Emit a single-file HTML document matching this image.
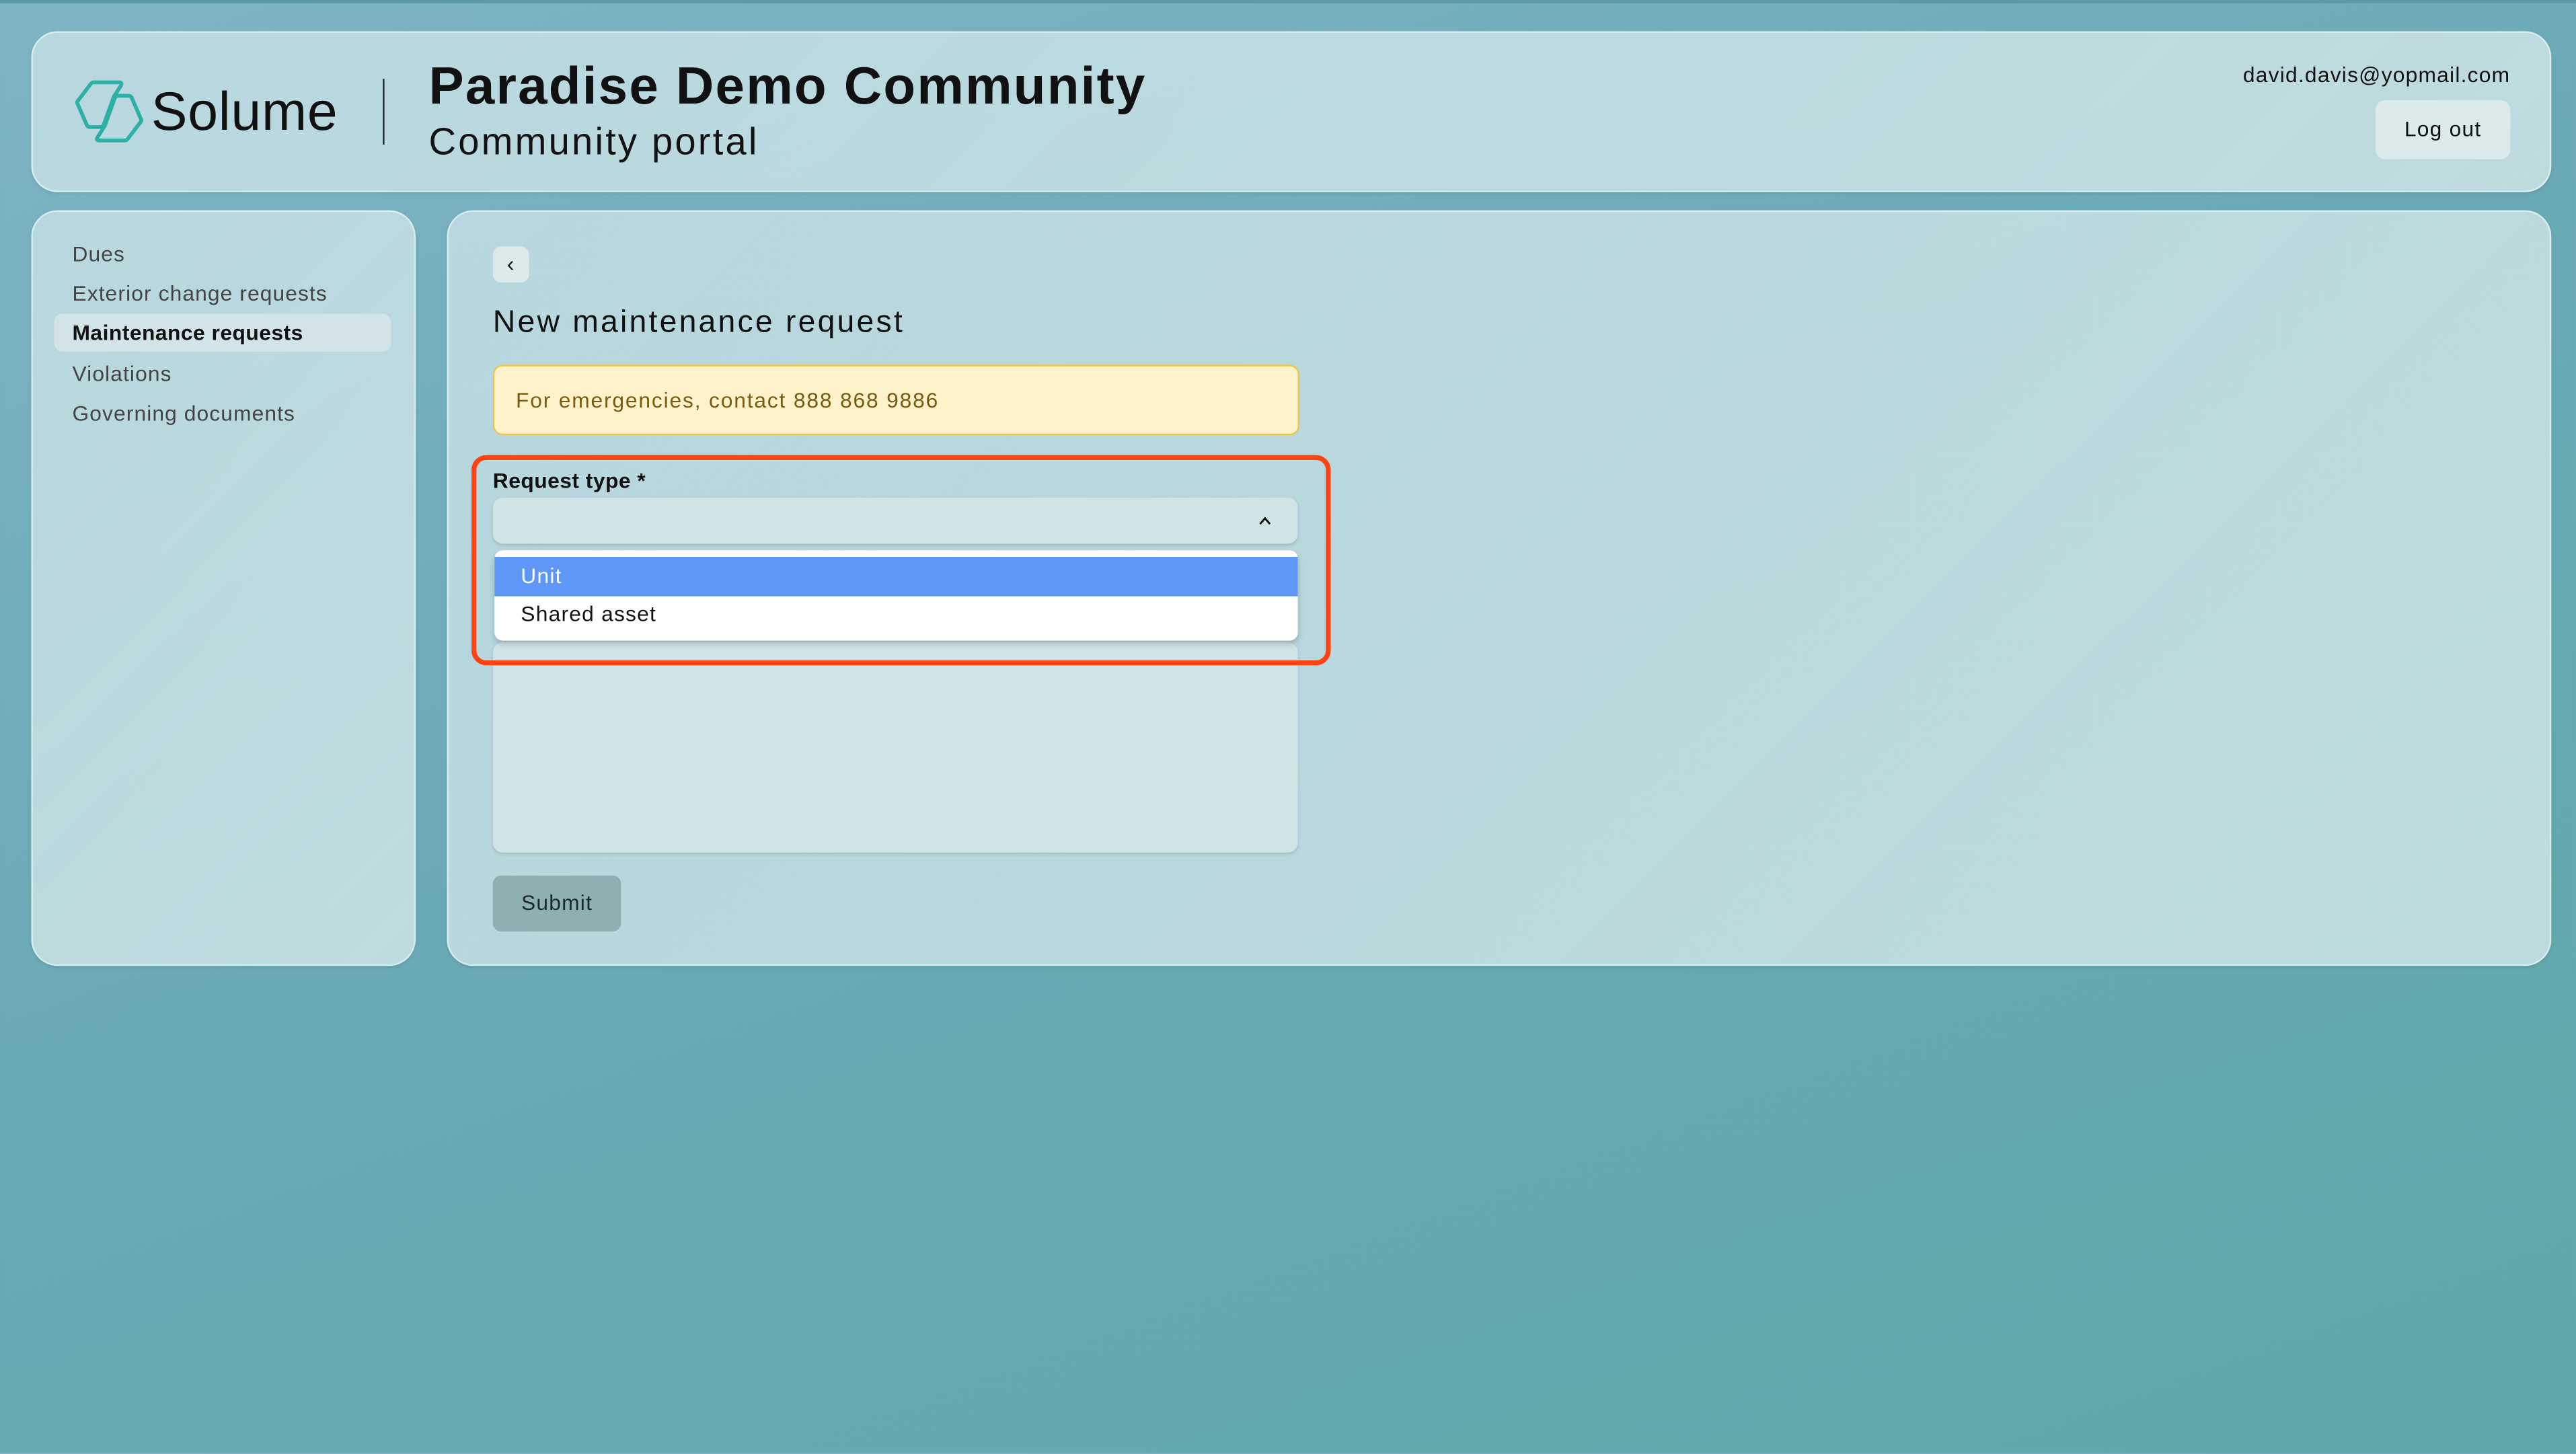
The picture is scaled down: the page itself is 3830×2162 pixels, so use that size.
<!DOCTYPE html>
<html><head><meta charset="utf-8"><style>
html,body{margin:0;padding:0;width:3830px;height:2160px;overflow:hidden}
body{background:linear-gradient(160deg,#7fb4c6 0%,#6aaab6 45%,#5ea8a8 100%)}
#w{position:absolute;left:0;top:0;width:1568px;height:885px;transform:scale(2.44260);transform-origin:0 0;font-family:"Liberation Sans",sans-serif;color:#111;letter-spacing:.5px}
.panel{position:absolute;background:linear-gradient(135deg,rgba(200,225,230,.8),rgba(205,228,230,.85));border:1px solid rgba(230,245,245,.7);border-radius:16px;box-shadow:0 1px 2px rgba(0,0,0,.08)}
.nav div{position:absolute;left:24px;font-size:13px;color:#444;letter-spacing:.45px}
</style></head><body><div id="w">
<div style="position:absolute;left:0;top:0;width:1568px;height:2px;background:#5e9aa6"></div>
<div class="panel" style="left:19px;top:19px;width:1532px;height:96px">
 <svg style="position:absolute;left:22px;top:24px" width="49" height="49" viewBox="0 0 360 360" fill="none" stroke="#2fb0a6" stroke-width="17" stroke-linejoin="round">
  <path d="M110 45 L225 45 Q240 45 232 60 L200 110 L155 235 Q150 245 140 245 L95 245 Q85 245 80 237 L38 140 Q35 135 38 130 L95 55 Q102 45 110 45 Z"/>
  <path d="M250 305 L135 305 Q120 305 128 290 L160 240 L205 115 Q210 105 220 105 L265 105 Q275 105 280 113 L322 210 Q325 215 322 220 L265 295 Q258 305 250 305 Z"/>
 </svg>
 <div style="position:absolute;left:72px;top:29px;font-size:33px;color:#111;letter-spacing:.3px">Solume</div>
 <div style="position:absolute;left:213px;top:28px;width:1px;height:40px;background:#222"></div>
 <div style="position:absolute;left:241px;top:14px;font-size:32px;font-weight:bold;letter-spacing:.9px">Paradise Demo Community</div>
 <div style="position:absolute;left:241px;top:53px;font-size:23px;letter-spacing:1.3px">Community portal</div>
 <div style="position:absolute;right:24px;top:18px;font-size:13px">david.davis@yopmail.com</div>
 <div style="position:absolute;right:24px;top:41px;width:82px;height:36px;border-radius:6px;background:#dceaec;font-size:13px;text-align:center;line-height:36px">Log out</div>
</div>
<div class="panel nav" style="left:19px;top:128px;width:232px;height:458px">
 <div style="top:18px">Dues</div>
 <div style="top:42px">Exterior change requests</div>
 <div style="top:62px;left:13px;width:205px;height:23px;border-radius:5px;background:#d2e4e8"></div>
 <div style="top:66px;left:24px;color:#111;font-weight:bold;letter-spacing:.2px">Maintenance requests</div>
 <div style="top:91px">Violations</div>
 <div style="top:115px">Governing documents</div>
</div>
<div class="panel" style="left:272px;top:128px;width:1279px;height:458px">
 <div style="position:absolute;left:27px;top:21px;width:22px;height:22px;border-radius:5px;background:#dceaec;font-size:13px;text-align:center;line-height:21px">‹</div>
 <div style="position:absolute;left:27px;top:57px;font-size:19px;letter-spacing:1.3px">New maintenance request</div>
 <div style="position:absolute;left:27px;top:93px;width:489px;height:41px;border:1px solid #efc54a;border-radius:6px;background:#fdf2c9;font-size:13px;color:#7a5a10;line-height:41px;text-indent:13px;letter-spacing:.75px">For emergencies, contact 888 868 9886</div>
 <div style="position:absolute;left:27px;top:156px;font-size:13px;font-weight:bold;letter-spacing:.2px">Request type *</div>
 <div style="position:absolute;left:27px;top:174px;width:490px;height:28px;border-radius:6px;background:#d0e4e6;box-shadow:0 1px 2px rgba(0,0,0,.15)"><svg style="position:absolute;right:16px;top:11px" width="8" height="6" viewBox="0 0 8 6"><path d="M1 5 L4 1.5 L7 5" fill="none" stroke="#111" stroke-width="1.2"/></svg></div>
 <div style="position:absolute;left:27px;top:262px;width:490px;height:128px;border-radius:6px;background:#d0e4e6;box-shadow:0 1px 2px rgba(0,0,0,.12)"></div>
 <div style="position:absolute;left:28px;top:206px;width:489px;height:55px;border-radius:5px;background:#fff;box-shadow:0 2px 4px rgba(0,0,0,.2)">
  <div style="position:absolute;left:0;top:4px;width:489px;height:24px;background:#5e97f8;color:#fff;font-size:13px;line-height:24px;text-indent:16px">Unit</div>
  <div style="position:absolute;left:16px;top:31px;font-size:13px">Shared asset</div>
 </div>
 <div style="position:absolute;left:14px;top:148px;width:517px;height:122px;border:3px solid #ff4212;border-radius:9px"></div>
 <div style="position:absolute;left:27px;top:404px;width:78px;height:34px;border-radius:5px;background:#8fb0b2;font-size:13px;text-align:center;line-height:34px;color:#1a2a2a">Submit</div>
</div>
</div></body></html>
